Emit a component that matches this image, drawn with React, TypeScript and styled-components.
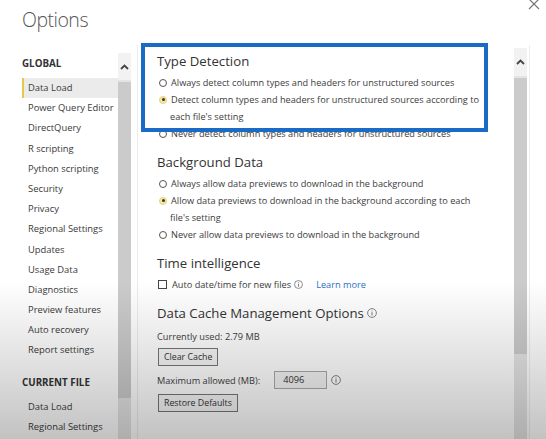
import React from 'react';
import styled, { createGlobalStyle } from 'styled-components';

const GlobalStyle = createGlobalStyle`
  html, body {
    margin: 0;
    padding: 0;
    background: #fff;
  }
  * {
    box-sizing: border-box;
  }
`;

const Window = styled.div`
  position: relative;
  width: 546px;
  height: 439px;
  overflow: hidden;
  background: #fff;
  font-family: 'Open Sans', 'Noto Sans', sans-serif;
  color: #333;
`;

const Title = styled.h1`
  margin: 0;
  height: 45px;
  padding: 4px 0 0 22px;
  font-size: 19.5px;
  font-weight: 300;
  letter-spacing: -0.5px;
  line-height: 32px;
  color: #555;
`;

const CloseButton = styled.div`
  position: absolute;
  top: -7px;
  right: 6px;
  width: 12px;
  height: 12px;
`;

const Body = styled.div`
  display: flex;
  height: 394px;
`;

const Sidebar = styled.nav`
  width: 118px;
  padding: 9px 0 0 22px;
  flex-shrink: 0;
`;

const GroupLabel = styled.div<{ $gap?: number }>`
  margin-top: ${(p) => p.$gap ?? 0}px;
  margin-bottom: 4px;
  height: 20px;
  line-height: 20px;
  font-size: 9.8px;
  font-weight: 700;
  color: #333;
`;

const NavItem = styled.div<{ $active?: boolean }>`
  height: 20.2px;
  line-height: 20px;
  padding-left: 4px;
  font-size: 9.4px;
  color: #3a3a3a;
  white-space: nowrap;
  background: ${(p) => (p.$active ? '#ebebeb' : 'transparent')};
  border-left: 2px solid ${(p) => (p.$active ? '#e5c74a' : 'transparent')};
`;

const ScrollTrack = styled.div<{ $top: number }>`
  width: 13px;
  margin-top: ${(p) => p.$top}px;
  display: flex;
  flex-direction: column;
  flex-shrink: 0;
  background: #e4e4e4;
`;

const ScrollArrow = styled.div<{ $height: number }>`
  height: ${(p) => p.$height}px;
  background: #f2f2f2;
  display: flex;
  align-items: center;
  justify-content: center;
`;

const ScrollThumb = styled.div<{ $height: number }>`
  height: ${(p) => p.$height}px;
  margin-top: 2px;
  background: #cbcbcb;
`;

const Content = styled.main`
  flex: 1;
  margin-left: 6px;
  border-left: 1px solid #ececec;
  padding: 6px 0 0 19px;
`;

const SectionTitle = styled.h2<{ $first?: boolean }>`
  margin: ${(p) => (p.$first ? 0 : 10)}px 0 3px;
  height: 20px;
  line-height: 20px;
  font-size: 13.2px;
  font-weight: 400;
  color: #333;
  display: flex;
  align-items: center;
`;

const OptionRow = styled.div`
  display: flex;
  align-items: center;
  height: 17px;
  font-size: 9.2px;
  color: #3c3c3c;
  white-space: nowrap;
`;

const Continuation = styled.div`
  height: 17px;
  line-height: 17px;
  padding-left: 13px;
  font-size: 9.2px;
  color: #3c3c3c;
`;

const Radio = styled.span<{ $checked?: boolean }>`
  width: 8px;
  height: 8px;
  margin: 0 4px 0 2px;
  border-radius: 50%;
  border: 1px solid ${(p) => (p.$checked ? '#e8d47c' : '#555')};
  flex-shrink: 0;
  display: flex;
  align-items: center;
  justify-content: center;
  background: ${(p) => (p.$checked ? '#f6e7a6' : '#fff')};

  &::after {
    content: '';
    display: ${(p) => (p.$checked ? 'block' : 'none')};
    width: 3px;
    height: 3px;
    border-radius: 50%;
    background: #333;
  }
`;

const Checkbox = styled.span`
  width: 9px;
  height: 9px;
  margin: 0 5px 0 1px;
  border: 1px solid #444;
  background: #fff;
  flex-shrink: 0;
`;

const Link = styled.a`
  margin-left: 10px;
  color: #2a72c6;
  text-decoration: none;
`;

const Note = styled.div`
  margin-top: 5px;
  height: 17px;
  line-height: 17px;
  font-size: 9.2px;
  color: #3c3c3c;
`;

const Button = styled.button<{ $gap: number }>`
  display: block;
  margin-top: ${(p) => p.$gap}px;
  margin-left: 1px;
  height: 18px;
  padding: 0 5px;
  font-family: inherit;
  font-size: 8.8px;
  color: #333;
  background: #f7f7f7;
  border: 1px solid #777;
`;

const FieldRow = styled.div`
  margin-top: 5px;
  display: flex;
  align-items: center;
  height: 18px;
  font-size: 9.2px;
  color: #3c3c3c;
`;

const NumberInput = styled.div`
  margin-left: 14px;
  width: 53px;
  height: 18px;
  padding-left: 8px;
  line-height: 16px;
  border: 1px solid #aaa;
  background: #f4f4f4;
  font-size: 9.2px;
  color: #333;
`;

const RightEdge = styled.div`
  width: 17px;
  margin-left: 2px;
  border-left: 1px solid #eee;
  flex-shrink: 0;
`;

// annotation frame drawn on top of the first section
const Highlight = styled.div`
  position: absolute;
  left: 141px;
  top: 43px;
  width: 347px;
  height: 89px;
  border: 4px solid #1a6bc6;
  pointer-events: none;
`;

const Shade = styled.div`
  position: absolute;
  inset: 0;
  background: linear-gradient(to bottom, rgba(0, 0, 0, 0) 64%, rgba(0, 0, 0, 0.1) 80%, rgba(0, 0, 0, 0.24) 100%);
  pointer-events: none;
`;

const ChevronUp = () => (
  <svg width="9" height="6" viewBox="0 0 9 6">
    <path d="M1 5 L4.5 1.5 L8 5" fill="none" stroke="#444" strokeWidth="1.8" />
  </svg>
);

const InfoIcon = ({ size = 9, gap = 3 }: { size?: number; gap?: number }) => (
  <svg width={size} height={size} viewBox="0 0 10 10" style={{ margin: `0 ${gap}px`, flexShrink: 0 }}>
    <circle cx="5" cy="5" r="4.4" fill="none" stroke="#666" strokeWidth="0.8" />
    <rect x="4.55" y="4.2" width="0.9" height="3.3" fill="#666" />
    <rect x="4.55" y="2.5" width="0.9" height="0.9" fill="#666" />
  </svg>
);

const globalItems = [
  'Data Load',
  'Power Query Editor',
  'DirectQuery',
  'R scripting',
  'Python scripting',
  'Security',
  'Privacy',
  'Regional Settings',
  'Updates',
  'Usage Data',
  'Diagnostics',
  'Preview features',
  'Auto recovery',
  'Report settings',
];

const fileItems = ['Data Load', 'Regional Settings'];

const App: React.FC = () => {
  return (
    <Window>
      <GlobalStyle />
      <Title>Options</Title>
      <CloseButton>
        <svg width="12" height="12" viewBox="0 0 12 12">
          <path d="M1 1 L11 11 M11 1 L1 11" stroke="#777" strokeWidth="1.2" />
        </svg>
      </CloseButton>

      <Body>
        <Sidebar>
          <GroupLabel>GLOBAL</GroupLabel>
          {globalItems.map((item, i) => (
            <NavItem key={item} $active={i === 0}>
              {item}
            </NavItem>
          ))}
          <GroupLabel $gap={12}>CURRENT FILE</GroupLabel>
          {fileItems.map((item) => (
            <NavItem key={item}>{item}</NavItem>
          ))}
        </Sidebar>

        <ScrollTrack $top={8}>
          <ScrollArrow $height={27}>
            <ChevronUp />
          </ScrollArrow>
          <ScrollThumb $height={316} />
        </ScrollTrack>

        <Content>
          <SectionTitle $first>Type Detection</SectionTitle>
          <OptionRow>
            <Radio />
            Always detect column types and headers for unstructured sources
          </OptionRow>
          <OptionRow>
            <Radio $checked />
            Detect column types and headers for unstructured sources according to
          </OptionRow>
          <Continuation>each file's setting</Continuation>
          <OptionRow>
            <Radio />
            Never detect column types and headers for unstructured sources
          </OptionRow>

          <SectionTitle>Background Data</SectionTitle>
          <OptionRow>
            <Radio />
            Always allow data previews to download in the background
          </OptionRow>
          <OptionRow>
            <Radio $checked />
            Allow data previews to download in the background according to each
          </OptionRow>
          <Continuation>file's setting</Continuation>
          <OptionRow>
            <Radio />
            Never allow data previews to download in the background
          </OptionRow>

          <SectionTitle>Time intelligence</SectionTitle>
          <OptionRow>
            <Checkbox />
            Auto date/time for new files
            <InfoIcon />
            <Link>Learn more</Link>
          </OptionRow>

          <SectionTitle>
            Data Cache Management Options
            <InfoIcon size={10} />
          </SectionTitle>
          <Note>Currently used: 2.79 MB</Note>
          <Button $gap={3}>Clear Cache</Button>
          <FieldRow>
            Maximum allowed (MB):
            <NumberInput>4096</NumberInput>
            <InfoIcon size={10} gap={4} />
          </FieldRow>
          <Button $gap={5}>Restore Defaults</Button>
        </Content>

        <ScrollTrack $top={3}>
          <ScrollArrow $height={28}>
            <ChevronUp />
          </ScrollArrow>
          <ScrollThumb $height={276} />
        </ScrollTrack>
        <RightEdge />
      </Body>

      <Highlight />
      <Shade />
    </Window>
  );
};

export default App;
